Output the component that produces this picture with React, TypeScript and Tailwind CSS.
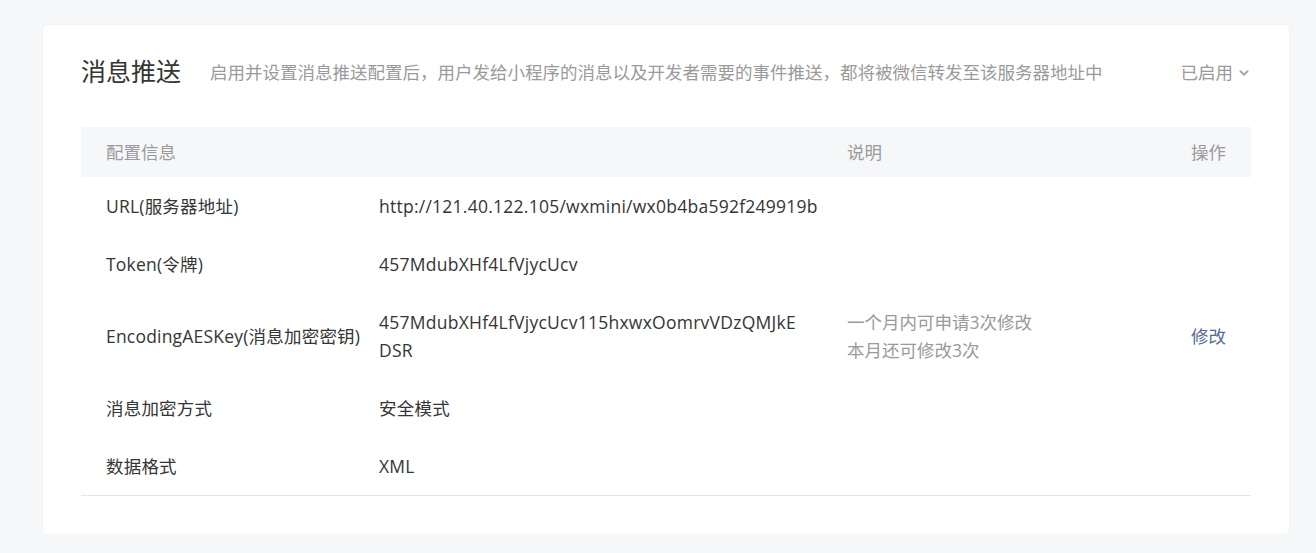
import { ChevronDown } from "lucide-react";

const ROWS = [
  { label: "URL(服务器地址)", value: "http://121.40.122.105/wxmini/wx0b4ba592f249919b" },
  { label: "Token(令牌)", value: "457MdubXHf4LfVjycUcv" },
  {
    label: "EncodingAESKey(消息加密密钥)",
    value: "457MdubXHf4LfVjycUcv115hxwxOomrvVDzQMJkEDSR",
    note: ["一个月内可申请3次修改", "本月还可修改3次"],
    action: "修改",
    breakAll: true,
  },
  { label: "消息加密方式", value: "安全模式" },
  { label: "数据格式", value: "XML" },
];

const font = { fontFamily: '"Open Sans", "Noto Sans CJK SC", sans-serif' };

export default function App() {
  return (
    <div className="min-h-[553px] bg-[#f6f7f9] pt-[25px] pr-[27px] pb-[20px] pl-[43px]" style={font}>
      <div className="rounded-[4px] bg-white px-[38px] pt-[29px] pb-[38px] shadow-[0_0_2px_rgba(0,0,0,0.06)]">
        <div className="flex h-[36px] items-center">
          <h2 className="text-[25px] font-normal text-[#353535]">消息推送</h2>
          <p className="ml-[29px] flex-1 text-[17.5px] text-[#9a9a9a]">
            启用并设置消息推送配置后，用户发给小程序的消息以及开发者需要的事件推送，都将被微信转发至该服务器地址中
          </p>
          <button className="flex items-center gap-[4px] text-[17.5px] text-[#9a9a9a]">
            已启用
            <ChevronDown className="mt-[2px] h-[14px] w-[14px] text-[#a8a8a8]" strokeWidth={3.5} />
          </button>
        </div>

        <div className="mt-[37px] border-b border-[#e5e5e5] text-[17.5px] leading-[28px]">
          <div className="grid h-[50px] grid-cols-[273px_468px_1fr_120px] items-center bg-[#f6f7f9] text-[#9a9a9a]">
            <div className="pl-[25px]">配置信息</div>
            <div />
            <div className="pl-[25px]">说明</div>
            <div className="pr-[25px] text-right">操作</div>
          </div>
          {ROWS.map((row) => (
            <div
              key={row.label}
              className="grid grid-cols-[273px_468px_1fr_120px] items-center py-[15px] text-[#353535]"
            >
              <div className="whitespace-nowrap pl-[25px] tracking-[0.2px]">{row.label}</div>
              <div
                className={
                  row.breakAll
                    ? "break-all pr-[22px] pl-[25px] tracking-[0.25px]"
                    : "whitespace-nowrap pl-[25px] tracking-[0.25px]"
                }
              >
                {row.value}
              </div>
              <div className="pl-[25px] text-[#9a9a9a]">
                {row.note?.map((line) => (
                  <div key={line}>{line}</div>
                ))}
              </div>
              <div className="pr-[25px] text-right text-[#576b95]">{row.action}</div>
            </div>
          ))}
        </div>
      </div>
    </div>
  );
}
